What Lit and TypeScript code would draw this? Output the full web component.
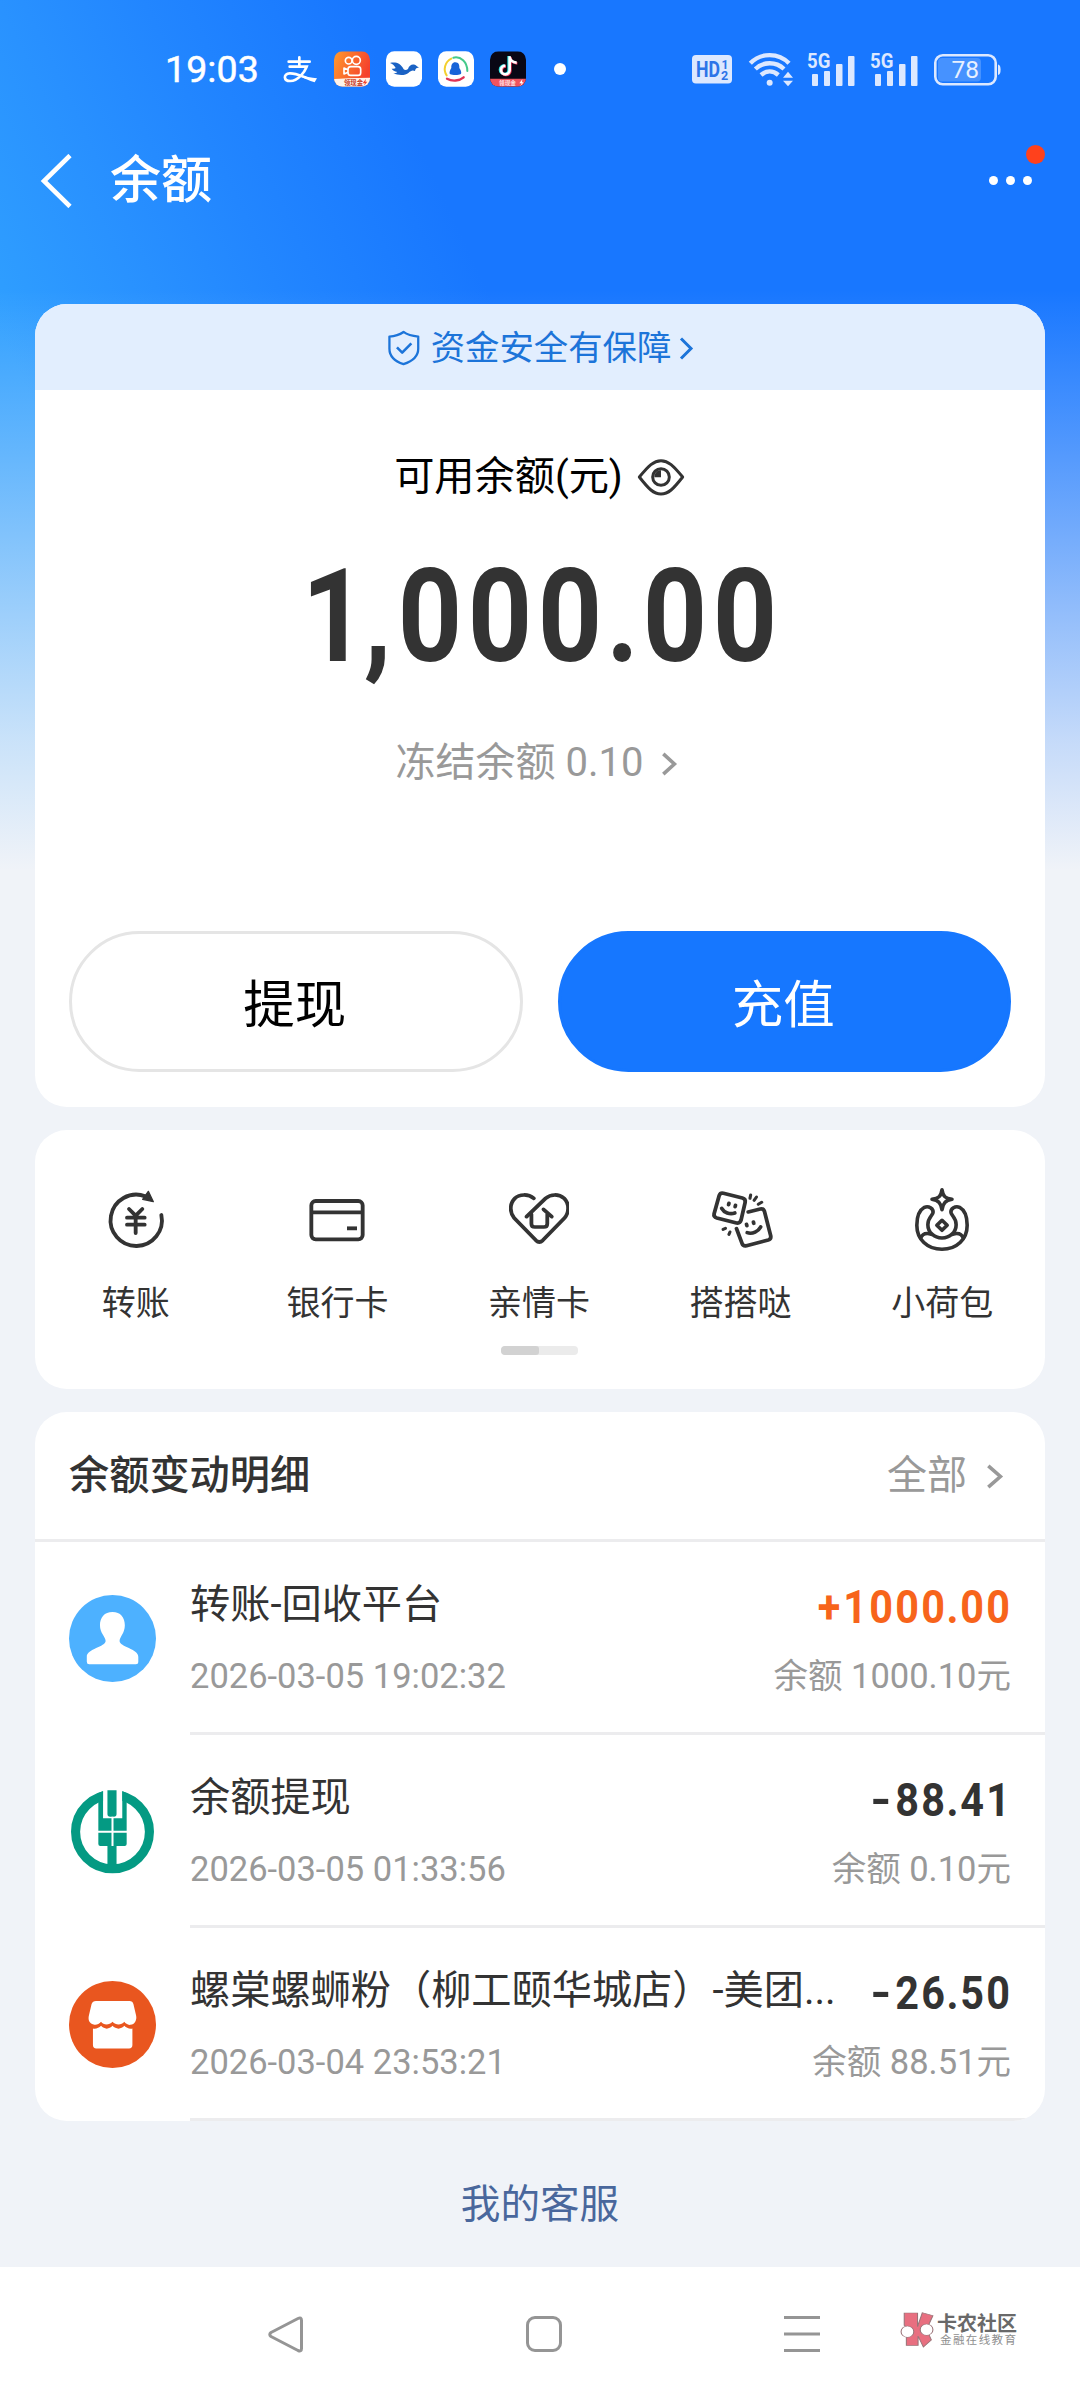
import { LitElement, html, css, nothing } from "lit";
import { customElement, property } from "lit/decorators.js";

const DARK = "#333";

interface Shortcut {
  label: string;
  icon: unknown;
}

interface Transaction {
  icon: unknown;
  title: string;
  time: string;
  amount: string;
  balance: string;
  income?: boolean;
}

const transferIcon = html`<svg width="60" height="60" viewBox="138 87 180 180" fill="none" stroke=${DARK} stroke-width="11.5" stroke-linecap="round">
  <path d="M304 165A77 77 0 1 1 256 109" />
  <path d="M265 94L280 125L248 118Z" fill=${DARK} stroke-width="4" stroke-linejoin="round" />
  <path d="M207 147L227 167L247 147M227 167V219M201 173H254M201 194H254" />
</svg>`;

const cardIcon = html`<svg width="60" height="60" viewBox="743 87 180 180" fill="none" stroke=${DARK} stroke-width="11.5">
  <rect x="756" y="123" width="154" height="115" rx="13" />
  <path d="M756 157H910" />
  <path d="M863 205H893" />
</svg>`;

const heartIcon = html`<svg width="60" height="60" viewBox="26 87 174 180" preserveAspectRatio="none" fill="none" stroke=${DARK} stroke-width="11" stroke-linecap="round" stroke-linejoin="round">
  <path d="M98 115C82 101 56 102 43 115C28 130 27 157 41 174L104 241Q114 251 124 241L187 174C201 157 201 130 186 115C170 101 147 102 132 115L77 170" />
  <path d="M91 163V191Q91 201 101 201H127Q137 201 137 191V163M126 148L150 170" />
</svg>`;

const facesIcon = html`<svg class="spill" width="60" height="60" viewBox="612 87 174 180" preserveAspectRatio="none" fill="none" stroke=${DARK} stroke-width="11" stroke-linecap="round" stroke-linejoin="round">
  <path d="M648 100L703 114Q713 117 711 127L699 181Q696 191 686 189L629 174Q619 171 621 161L636 106Q639 98 648 100Z" />
  <path d="M720 156L755 147Q764 145 767 154L785 227Q787 237 778 240L715 257Q705 259 702 250L686 206" />
  <path d="M664 130L663 134M683 136L682 140M643 145C650 158 666 164 681 159" />
  <path d="M715 193L716 197M735 186L736 190M717 218C732 224 750 213 756 201" />
  <path d="M727 105L725 115M744 111L737 121M759 127L749 133M654 205L647 208M667 216L664 223" stroke-width="9" />
</svg>`;

const purseIcon = html`<svg class="spill" width="60" height="60" viewBox="1204 87 174 180" preserveAspectRatio="none" fill="none" stroke=${DARK} stroke-width="10.5" stroke-linecap="round" stroke-linejoin="round">
  <path d="M1291 89C1294 109 1300 115 1320 118C1300 122 1294 130 1291 149C1288 130 1282 122 1262 118C1282 115 1288 109 1291 89Z" />
  <path d="M1291 268C1248 268 1218 238 1218 196C1218 170 1226 150 1240 142C1252 136 1267 146 1265 158C1263 168 1250 173 1250 194C1250 216 1268 234 1291 234C1314 234 1332 216 1332 194C1332 173 1319 168 1317 158C1315 146 1330 136 1342 142C1356 150 1364 170 1364 196C1364 238 1334 268 1291 268Z" />
  <path d="M1229 234Q1237 215 1260 223M1353 234Q1345 215 1322 223" />
  <path d="M1291 181L1306 196L1291 211L1276 196Z" />
</svg>`;

const personIcon = html`<svg width="87" height="87" viewBox="0 0 86 86">
  <circle cx="43" cy="43" r="43" fill="#4db1ff" />
  <path fill="#fff" d="M43 16.7C51 16.7 55.2 22 55.2 30C55.2 38 50 41.5 50 45.5C50 51.5 68.5 53 68.5 61V66Q68.5 68.5 66 68.5H20Q17.6 68.5 17.6 66V61C17.6 53 36.2 51.5 36.2 45.5C36.2 41.5 30.6 38 30.6 30C30.6 22 35 16.7 43 16.7Z" />
</svg>`;

const bankIcon = html`<svg width="87" height="87" viewBox="117 113 258 258">
  <circle cx="246" cy="243" r="109.5" fill="none" stroke="#049a83" stroke-width="27" />
  <path fill="#fff" d="M218 113H275V160H218Z" />
  <path fill="#049a83" d="M204 128L218 122V203H275V122L288 128V279Q288 285 282 285H210Q204 285 204 279Z" />
  <path fill="#049a83" d="M231 120H258V190Q258 198 250 198H239Q231 198 231 190ZM231 284H258V350H231Z" />
  <path stroke="#fff" stroke-width="6" d="M246 198V285M202 243H290" />
</svg>`;

const storeIcon = html`<svg width="87" height="87" viewBox="117 693 258 258">
  <circle cx="246" cy="822" r="129" fill="#e9561f" />
  <path fill="#fff" d="M197 752H296Q306 752 308 761L316 795C319 808 312 822 299 823C291 824 285 819 281 814C272 825 256 825 246 814C236 825 220 825 212 814C206 821 198 824 190 822C177 818 173 808 176 795L184 761Q187 752 197 752Z" />
  <path fill="#fff" d="M188 834C197 836 206 832 212 826C222 837 236 837 246 826C256 837 272 837 281 826C287 832 296 836 305 834V883Q305 893 295 893H198Q188 893 188 883Z" />
</svg>`;

const chevron = (w: number, h: number, color: string, stroke: number) =>
  html`<svg width=${w} height=${h} viewBox="0 0 ${w} ${h}" fill="none" stroke=${color} stroke-width=${stroke}>
    <path d="M${stroke / 2 + 0.5} ${stroke / 2}L${w - stroke} ${h / 2}L${stroke / 2 + 0.5} ${h - stroke / 2}" />
  </svg>`;

/* Digits share one pitch; separators take half of it. */
const spaced = (value: string) =>
  [...value].map((c) => {
    const kind = /[.,]/.test(c) ? "sep" : c === "-" ? "digit dash" : c === "1" ? "digit one" : "digit";
    return html`<span class=${kind}>${c}</span>`;
  });

@customElement("status-bar")
class StatusBar extends LitElement {
  static styles = css`
    :host { display: flex; align-items: center; height: 137px; padding: 0 79px 0 165px; box-sizing: border-box;
      justify-content: space-between; color: #fff; font-family: Roboto, "Noto Sans CJK SC", sans-serif; }
    .side { display: flex; align-items: center; }
    .system { padding-top: 2px; }
    .time { font-size: 37.5px; font-weight: 400; line-height: 40px; width: 118px; letter-spacing: 0.1px;
      -webkit-text-stroke: 0.5px #fff; }
    .apps { display: flex; gap: 16px; align-items: center; }
    svg { display: block; overflow: visible; }
    .dot { width: 12px; height: 12px; border-radius: 50%; background: #fff; margin-left: 28px; }
    .wifi { margin-left: 17px; }
    .sig { margin-left: 14px; display: flex; flex-direction: column; position: relative; width: 47px; height: 34px; }
    .sig + .sig { margin-left: 16px; }
    .sig span { position: absolute; left: -1px; top: -3px; font-size: 20px; line-height: 22px; font-weight: 700; color: #dce8ff;
      transform: scaleX(0.93); transform-origin: left; }
    .battery { margin-left: 16px; }
  `;

  private signal() {
    return html`<div class="sig">
      <svg width="47" height="34" viewBox="0 0 47 34" fill="#dce8ff">
        <rect x="4" y="21" width="6" height="12" rx="1" /><rect x="16" y="18" width="6" height="15" rx="1" />
        <rect x="28" y="11" width="6.5" height="22" rx="1" /><rect x="40" y="3" width="6.5" height="30" rx="1" />
      </svg>
      <span>5G</span>
    </div>`;
  }

  render() {
    return html`
      <div class="side">
        <div class="time">19:03</div>
        <div class="apps">
          <svg width="35" height="36" viewBox="433 62 105 106" fill="none" stroke="#fff" stroke-linecap="round">
            <path stroke-width="8" d="M450 93H513M482 80V107M453 108H504C498 124 478 151 455 151C434 151 433 129 453 128C468 127 484 134 500 140" />
            <path stroke="none" fill="#fff" d="M482 131C500 138 518 142 535 143L528 155C512 150 494 142 480 136Z" />
          </svg>
          <svg width="36" height="36" viewBox="582 62 108 106">
            <defs>
              <linearGradient id="k" x1="0" y1="0" x2="1" y2=".4"><stop stop-color="#ff9a2e" /><stop offset="1" stop-color="#f5412c" /></linearGradient>
              <clipPath id="kc"><rect x="582" y="62" width="108" height="106" rx="25" /></clipPath>
            </defs>
            <g clip-path="url(#kc)">
              <rect x="582" y="62" width="108" height="106" fill="url(#k)" />
              <g fill="none" stroke="#fff" stroke-width="5">
                <circle cx="626" cy="90" r="10" /><circle cx="649" cy="89" r="12" />
                <rect x="624" y="108" width="38" height="26" rx="8" /><path d="M624 117L612 112V130L624 125" stroke-linejoin="round" />
              </g>
              <path d="M582 145Q610 142 690 141V168H582Z" fill="#fff3ea" />
              <text x="612" y="164" font-size="19" font-weight="700" fill="#c8402a">领现金</text>
              <path d="M678 144L668 158H675L671 166L682 153H676Z" fill="#f5412c" />
            </g>
          </svg>
          <svg width="36" height="36" viewBox="738 62 108 106">
            <rect x="738" y="62" width="108" height="106" rx="25" fill="#fff" />
            <path fill="#1a62c4" d="M750 97C766 93 782 97 791 116C794 119 800 119 804 115C808 102 820 97 830 106L838 112C829 110 826 115 825 121C817 117 812 121 806 126C796 135 776 135 760 128C766 128 770 126 772 124C764 122 757 118 755 114C761 115 765 114 767 112C763 104 757 99 750 97Z" />
          </svg>
          <svg width="36" height="36" viewBox="894 62 108 106" fill="none">
            <rect x="894" y="62" width="108" height="106" rx="25" fill="#fff" />
            <path d="M934 84C914 94 909 118 920 134" stroke="#f3cf2d" stroke-width="6" stroke-linecap="round" />
            <path d="M940 81C962 76 982 93 982 121" stroke="#45c98a" stroke-width="6" stroke-linecap="round" />
            <path d="M921 144C937 153 958 151 971 140" stroke="#e03355" stroke-width="7" stroke-linecap="round" />
            <path d="M946 95C956 95 959 104 958 112C965 122 965 130 961 131C957 134 936 134 931 131C927 130 928 121 934 112C933 103 937 95 946 95Z" fill="#1763d8" />
          </svg>
          <svg width="36" height="36" viewBox="1050 62 108 106">
            <defs><clipPath id="dc"><rect x="1050" y="62" width="108" height="106" rx="25" /></clipPath></defs>
            <g clip-path="url(#dc)">
              <rect x="1050" y="62" width="108" height="106" fill="#090714" />
              <g fill="none" stroke-width="8">
                <path d="M1106 76V117A13 13 0 1 1 1093 104M1106 80Q1111 94 1127 95" stroke="#2de0e0" />
                <path d="M1111 79V120A13 13 0 1 1 1098 107M1111 83Q1116 97 1132 98" stroke="#f2385a" />
                <path d="M1109 77V118A13 13 0 1 1 1096 105M1109 81Q1114 95 1130 96" stroke="#fff" />
              </g>
              <path d="M1050 144H1158V168H1050Z" fill="#f2535e" />
              <text x="1077" y="163" font-size="17" font-weight="700" fill="#ffe3e6">领现金</text>
              <path d="M1147 146L1138 158H1145L1141 167L1151 155H1146Z" fill="#fff" />
            </g>
          </svg>
        </div>
        <div class="dot"></div>
      </div>
      <div class="side system">
        <svg width="40" height="29" viewBox="0 0 40 29">
          <rect width="40" height="28.5" rx="4" fill="#dce8ff" />
          <g fill="#2c74e8" font-weight="700">
            <text x="4" y="22" font-size="22" textLength="24" lengthAdjust="spacingAndGlyphs">HD</text>
            <text x="29.5" y="13.5" font-size="12">1</text><text x="29" y="25" font-size="12.5">2</text>
          </g>
        </svg>
        <svg class="wifi" width="45" height="35" viewBox="273 63 135 105" fill="none" stroke="#dce8ff" stroke-width="13">
          <path d="M277 97C308 64 362 64 393 97M292 114C316 91 354 91 378 114M309 132C325 118 345 118 361 132" />
          <circle cx="335" cy="155" r="9" fill="#dce8ff" stroke="none" />
          <path d="M375 140L390 122L405 140ZM375 149L390 166L405 149Z" fill="#dce8ff" stroke="none" />
        </svg>
        ${this.signal()} ${this.signal()}
        <svg class="battery" width="67" height="32" viewBox="0 0 67 32">
          <rect x="1.3" y="1.3" width="60.4" height="29" rx="7.5" fill="none" stroke="#dce8ff" stroke-width="2.6" />
          <rect x="4" y="4" width="43" height="23.600" rx="4" fill="#fff" opacity=".2" />
          <path d="M64 10.500Q66.600 11 66.600 15.800T64 21Z" fill="#dce8ff" />
          <text x="31.300" y="24.300" font-size="24.500" fill="#e8f0ff" text-anchor="middle">78</text>
        </svg>
      </div>`;
  }
}

@customElement("balance-card")
class BalanceCard extends LitElement {
  static styles = css`
    :host { display: flex; flex-direction: column; align-items: center; height: 803px; border-radius: 32px; overflow: hidden;
      background: #fff; font-family: Roboto, "Noto Sans CJK SC", sans-serif; }
    svg { display: block; }
    .banner { align-self: stretch; height: 86px; padding: 2px 0 0 2px; box-sizing: border-box; background: #e2eefe; color: #1c74d9;
      display: flex; align-items: center; justify-content: center; font-size: 34.4px; line-height: 50px; }
    .banner .shield { margin-right: 11px; }
    .banner .go { margin: 0 1px 0 8px; }
    .label { display: flex; align-items: center; gap: 14px; margin-top: 57px; height: 60px; line-height: 60px; font-size: 40.2px; color: #000; }
    .label svg { margin-right: 1px; }
    .amount { display: flex; margin: 34px 10px 0 0; height: 152px; line-height: 152px; font-size: 129px; font-weight: 700; color: #333; }
    .digit, .sep { display: flex; justify-content: center; width: 70px; transform: scaleX(0.87); }
    .one { transform: translateX(9px) scaleX(0.87); }
    .sep { width: 35px; }
    .frozen { display: flex; align-items: center; margin: 40px 1px 0 0; height: 60px; line-height: 62px; font-size: 40px; color: #999; }
    .frozen .go { margin: 2px 5px 0 18px; }
    .actions { align-self: stretch; display: grid; grid-template-columns: 1fr 1fr; gap: 35px; margin-top: 138px; padding: 0 34px; }
    .btn { height: 141px; border-radius: 71px; box-sizing: border-box; display: flex; align-items: center; justify-content: center;
      font: inherit; font-size: 51.5px; padding: 0 2px 3px 0; border: 3px solid #e5e5e5; background: #fff; color: #000; }
    .btn.primary { border-color: #1677ff; background: #1677ff; color: #fff; }
  `;

  render() {
    return html`
      <div class="banner">
        <svg class="shield" width="33" height="36" viewBox="82 56 98 110" fill="none" stroke="#1c74d9" stroke-width="7" stroke-linejoin="round">
          <path d="M131 62C144 72 160 75 176 76V113C176 136 156 152 131 160C106 152 88 136 88 113V76C104 75 118 71 131 62Z" />
          <path d="M111 109L127 125L155 97" stroke-width="8" />
        </svg>
        <span>资金安全有保障</span>
        <span class="go">${chevron(15, 23, "#1c74d9", 3)}</span>
      </div>
      <div class="label">
        <span>可用余额(元)</span>
        <svg width="48" height="40" viewBox="830 440 144 120" fill="none" stroke="#333" stroke-width="9" stroke-linejoin="round">
          <path d="M837 500C865 466 880 451 902 451C924 451 939 466 967 500C939 536 924 551 902 551C880 551 865 536 837 500Z" />
          <circle cx="902" cy="500" r="25" />
          <path d="M902 480V501H882C882 488 890 480 902 480Z" fill="#333" stroke="none" />
        </svg>
      </div>
      <div class="amount">${spaced("1,000.00")}</div>
      <div class="frozen"><span>冻结余额 0.10</span><span class="go">${chevron(17, 24, "#999", 3.6)}</span></div>
      <div class="actions">
        <button class="btn">提现</button>
        <button class="btn primary">充值</button>
      </div>`;
  }
}

@customElement("shortcut-card")
class ShortcutCard extends LitElement {
  static styles = css`
    :host { display: flex; flex-direction: column; align-items: center; height: 259px; border-radius: 32px; background: #fff;
      font-family: "Noto Sans CJK SC", sans-serif; }
    .items { align-self: stretch; display: grid; grid-template-columns: repeat(5, 1fr); padding: 59px 2px 0 0; }
    .item { display: flex; flex-direction: column; align-items: center; gap: 27px; font-size: 34px; line-height: 50px; color: #333; }
    svg { display: block; }
    .spill { overflow: visible; }
    .pager { width: 77px; height: 9px; margin: 20px 2px 0 0; border-radius: 4px; background: #ebebeb; overflow: hidden; }
    .thumb { width: 50%; height: 100%; background: #d2d2d2; border-radius: 3px; }
  `;
  private items: Shortcut[] = [
    { label: "转账", icon: transferIcon },
    { label: "银行卡", icon: cardIcon },
    { label: "亲情卡", icon: heartIcon },
    { label: "搭搭哒", icon: facesIcon },
    { label: "小荷包", icon: purseIcon },
  ];

  render() {
    return html`
      <div class="items">${this.items.map((i) => html`<div class="item">${i.icon}<span>${i.label}</span></div>`)}</div>
      <div class="pager"><div class="thumb"></div></div>`;
  }
}

@customElement("transaction-row")
class TransactionRow extends LitElement {
  static styles = css`
    :host { display: flex; height: 193px; padding-left: 34px; align-items: center; box-sizing: border-box; }
    svg { display: block; }
    .icon { width: 121px; flex: none; }
    .body { flex: 1; height: 193px; box-sizing: border-box; border-bottom: 3px solid #ececee; padding: 33px 34px 0 0; }
    .line { display: flex; justify-content: space-between; white-space: nowrap; }
    .title { font-size: 40.2px; line-height: 60px; color: #333; }
    .amount { display: flex; font-size: 47px; font-weight: 700; line-height: 64px; height: 60px; color: #333; }
    .amount.income { color: #f7641b; }
    .digit, .sep { display: flex; justify-content: center; width: 26px; transform: scaleX(0.88); }
    .dash { transform: scaleX(1.15); }
    .sep { width: 13px; }
    .meta { margin-top: 16px; font-size: 34.5px; line-height: 50px; color: #999; }
  `;
  @property({ attribute: false }) item!: Transaction;

  render() {
    const t = this.item;
    if (!t) return nothing;
    return html`
      <div class="icon">${t.icon}</div>
      <div class="body">
        <div class="line">
          <span class="title">${t.title}</span>
          <span class="amount ${t.income ? "income" : ""}">${spaced(t.amount)}</span>
        </div>
        <div class="line meta"><span>${t.time}</span><span>余额 ${t.balance}元</span></div>
      </div>`;
  }
}

@customElement("app-root")
class AppRoot extends LitElement {
  static styles = css`
    :host { display: flex; flex-direction: column; width: 1080px; height: 2400px; overflow: hidden;
      font-family: Roboto, "Noto Sans CJK SC", sans-serif;
      background:
        linear-gradient(180deg, rgba(240, 243, 248, 0) 290px, rgba(240, 243, 248, 0.27) 450px, rgba(240, 243, 248, 0.8) 740px, #f0f3f8 870px) no-repeat,
        linear-gradient(65deg, #2f9fff 0, #2f9fff 240px, #2890ff 400px, #2286ff 510px, #1877ff 700px) 0 0 / 1080px 900px no-repeat;
      background-color: #f0f3f8; }
    svg { display: block; }
    .header { display: flex; align-items: center; height: 87px; padding: 0 48px 0 40px; color: #fff; }
    .header h1 { margin: 0 auto 0 38px; font-size: 51px; font-weight: 500; line-height: 80px; }
    .more { position: relative; display: flex; gap: 8px; }
    .more i { width: 9px; height: 9px; border-radius: 50%; background: #fff; }
    .more b { position: absolute; right: -13px; top: -31px; width: 19px; height: 19px; border-radius: 50%; background: #ff411c; }
    .cards { display: flex; flex-direction: column; gap: 23px; margin: 80px 35px 0; }
    .list { background: #fff; border-radius: 32px; overflow: hidden; height: 709px; }
    .list-head { display: flex; align-items: center; justify-content: space-between; height: 130px; box-sizing: border-box;
      padding: 1px 41px 0 34px; border-bottom: 3px solid #ececee; font-size: 40px; line-height: 60px; }
    .list-head h2 { margin: 0; font-size: 40.2px; font-weight: 500; color: #333; }
    .all { display: flex; align-items: center; gap: 19px; color: #999; }
    .service { flex: 1; display: flex; justify-content: center; padding-top: 54px; font-size: 39.6px; line-height: 60px; color: #49679c; }
    .nav { height: 133px; background: #fff; display: flex; box-sizing: border-box; padding: 49px 0 0 267px; }
    .nav .home { margin-left: 222px; }
    .nav .menu { margin-left: 222px; }
    .mark { display: flex; margin: -4px 0 0 80px; gap: 3px; }
    .mark .name { font-size: 20px; line-height: 20px; font-weight: 700; color: #696969; margin-top: 2px; }
    .mark .sub { font-size: 11.5px; line-height: 14px; letter-spacing: 1.4px; color: #8f8f8f; margin: -1px 0 0 3px; }
  `;
  private rows: Transaction[] = [
    { icon: personIcon, title: "转账-回收平台", time: "2026-03-05 19:02:32", amount: "+1000.00", balance: "1000.10", income: true },
    { icon: bankIcon, title: "余额提现", time: "2026-03-05 01:33:56", amount: "-88.41", balance: "0.10" },
    { icon: storeIcon, title: "螺棠螺蛳粉（柳工颐华城店）-美团...", time: "2026-03-04 23:53:21", amount: "-26.50", balance: "88.51" },
  ];

  render() {
    return html`
      <status-bar></status-bar>
      <div class="header">
        <svg width="32" height="54" viewBox="0 0 32 54" fill="none" stroke="#fff" stroke-width="4.6"><path d="M30 1.5L4 27L30 52.5" /></svg>
        <h1>余额</h1>
        <div class="more"><i></i><i></i><i></i><b></b></div>
      </div>
      <div class="cards">
        <balance-card></balance-card>
        <shortcut-card></shortcut-card>
        <section class="list">
          <div class="list-head"><h2>余额变动明细</h2><div class="all"><span>全部</span>${chevron(18, 25, "#999", 3.6)}</div></div>
          ${this.rows.map((r) => html`<transaction-row .item=${r}></transaction-row>`)}
        </section>
      </div>
      <div class="service">我的客服</div>
      <nav class="nav">
        <svg width="37" height="37" viewBox="0 0 37 37" fill="none" stroke="#959595" stroke-width="3" stroke-linejoin="round">
          <path d="M31 2.5Q34.5 0.8 34.5 4.5V32.5Q34.5 36 31 34.500L4 20.5Q1.5 18.5 4 16.5Z" />
        </svg>
        <svg class="home" width="36" height="36" viewBox="0 0 36 36" fill="none" stroke="#959595" stroke-width="3"><rect x="1.5" y="1.5" width="33" height="33" rx="7.5" /></svg>
        <svg class="menu" width="36" height="36" viewBox="0 0 36 36" stroke="#959595" stroke-width="3"><path d="M0 1.5H36M0 18H36M0 34.5H36" /></svg>
        <div class="mark">
          <svg width="34" height="36" viewBox="1232 488 64 108" preserveAspectRatio="none" stroke="#9a7378" stroke-width="2">
            <path fill="#e86f80" d="M1240 491H1265V532L1274 490L1294 499L1282 540L1291 572L1276 593L1266 560V588H1244V560L1252 540L1240 528Z" />
            <ellipse cx="1246" cy="547" rx="12" ry="17" fill="#fff" /><ellipse cx="1282" cy="541" rx="12" ry="17" fill="#fff" />
          </svg>
          <div><div class="name">卡农社区</div><div class="sub">金融在线教育</div></div>
        </div>
      </nav>`;
  }
}
